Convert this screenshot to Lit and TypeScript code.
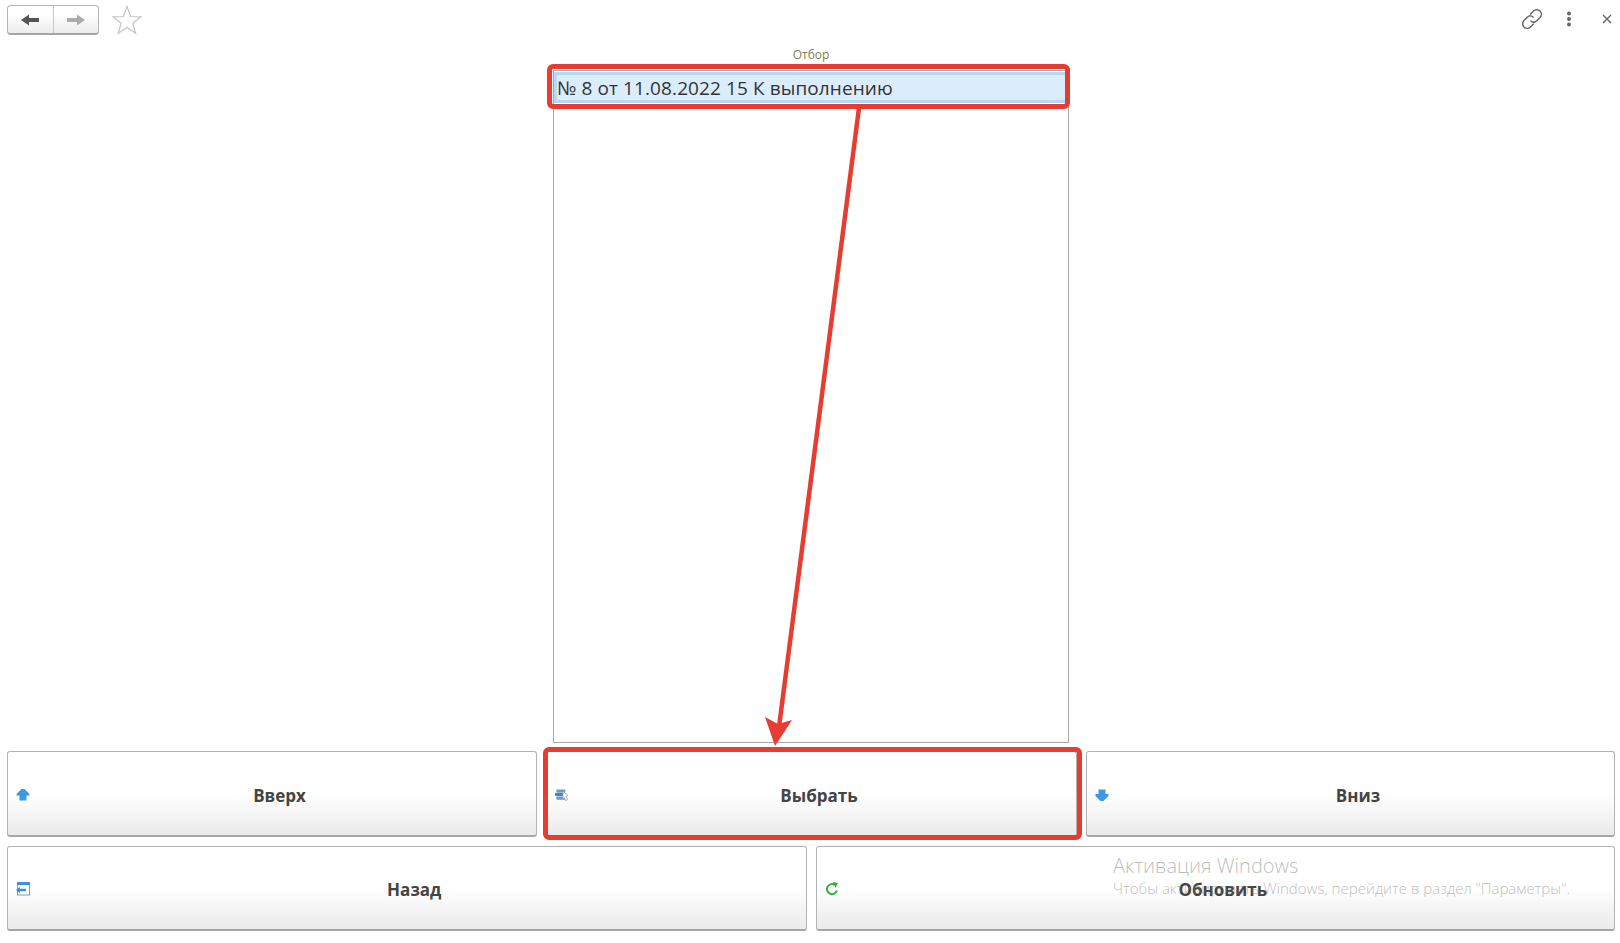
import { LitElement, html, css, svg } from "lit";
import { customElement } from "lit/decorators.js";

const upIcon = svg`<svg class="ico" viewBox="0 0 14 14"><path d="M5.500 1 L8.500 1 L13.500 6 L13.500 7.500 L10.500 7.500 L10.500 12.500 L3.500 12.500 L3.500 7.500 L.5 7.500 L.5 6 Z" fill="#3d9ae2"/></svg>`;
const downIcon = svg`<svg class="ico" viewBox="0 0 14 14"><path d="M3.500 1.500 L10.500 1.500 L10.500 6 L13.500 6 L13.500 8 L8.500 13 L5.500 13 L.5 8 L.5 6 L3.500 6 Z" fill="#3d9ae2"/></svg>`;
const chooseIcon = svg`<svg class="ico" viewBox="0 0 15 14"><rect x="1.500" y="1" width="9.500" height="3.200" rx=".8" fill="#6a9bcf"/><rect x="0" y="4.600" width="11" height="3.400" rx=".8" fill="#4d82bb"/><rect x="1.500" y="8.500" width="9.500" height="3.500" rx=".8" fill="#6a9bcf"/><path d="M8.500 3 L14 7.500 L12 8.500 L13.500 12 L11.500 13 L10 10 L8.500 11.500 Z" fill="#fff" stroke="#8a97a3" stroke-width=".8"/></svg>`;
const backIcon = svg`<svg class="ico" viewBox="0 0 14 14"><rect x="1.500" y=".5" width="12" height="12.500" fill="#fff" stroke="#7c9fc0"/><rect x="1" y="0" width="13" height="3" fill="#3f92dc"/><path d="M0 8 L4 4.800 L4 6.800 L10 6.800 L10 9.200 L4 9.200 L4 11.200 Z" fill="#3d8fd8"/></svg>`;
const refreshIcon = svg`<svg class="ico" viewBox="0 0 14 14"><path d="M11.800 8.500 A5 5 0 1 1 9.500 2.800" fill="none" stroke="#35ae3c" stroke-width="2"/><path d="M7.800 0 L13 1 L10.500 5.800 Z" fill="#35ae3c"/></svg>`;

@customElement("app-root")
export class AppRoot extends LitElement {
  static styles = css`
    :host { display: block; position: relative; width: 1620px; height: 943px; overflow: hidden; background: #fff; font-family: "Open Sans", "Noto Sans", sans-serif; }
    .top { height: 40px; display: flex; align-items: flex-start; padding: 5px 0 0 7px; box-sizing: border-box; }
    .nav { display: flex; width: 92px; height: 30px; box-sizing: border-box; border: 1px solid #b4b4b4; border-bottom: 2px solid #a6a6a6; border-radius: 4px; background: linear-gradient(#fff 30%, #ececec); }
    .nav div { flex: 1; display: flex; align-items: center; justify-content: center; }
    .nav div + div { border-left: 1px solid #c8c8c8; }
    .nav svg { width: 18px; height: 12px; }
    .star { width: 30px; height: 30px; margin-left: 13px; }
    .tools { margin-left: auto; display: flex; align-items: center; height: 28px; }
    .tools svg { display: block; }
    .link { width: 22px; height: 22px; margin-right: 23px; }
    .dots { width: 6px; height: 16px; margin-right: 30px; }
    .close { width: 10px; height: 10px; margin-right: 8px; }
    .label { height: 30px; line-height: 29px; text-align: center; font-size: 12px; color: #7f7d55; padding-left: 2px; box-sizing: border-box; }
    .list { width: 516px; height: 673px; margin-left: 553px; box-sizing: border-box; border: 1px solid #a9a9a9; padding: 1px 0 0 0; }
    .row { height: 31px; box-sizing: border-box; border: 3px solid #b6d9f6; border-right: 0; background: #dbedfd; color: #333; font-size: 19px; letter-spacing: .1px; line-height: 27px; white-space: nowrap; }
    .buttons { display: grid; gap: 9px; padding: 8px 5px 0 7px; }
    .r3 { grid-template-columns: 530px 531px 1fr; }
    .r3 .btn { height: 86px; }
    .r2 { grid-template-columns: 1fr 1fr; padding-top: 9px; }
    .btn { height: 85px; box-sizing: border-box; display: flex; align-items: center; padding: 0 7px 0 8px; border: 1px solid #b3b3b3; border-bottom: 2px solid #a6a6a6; border-radius: 3px; background: linear-gradient(#fff 50%, #ececec 95%); color: #444; font-size: 17px; font-weight: 700; }
    .btn span { flex: 1; text-align: center; padding-top: 3px; }
    .ico { width: 14px; height: 14px; flex: none; margin-top: 2px; }
    .mark { position: absolute; pointer-events: none; box-sizing: border-box; border: 5px solid #e63c32; border-radius: 6px; }
    .mark.a { left: 547px; top: 64px; width: 523px; height: 45px; }
    .mark.b { left: 543px; top: 747px; width: 539px; height: 93px; }
    .arrow { position: absolute; left: 0; top: 0; width: 1620px; height: 943px; pointer-events: none; }
    .wm { position: absolute; left: 1113px; top: 852px; pointer-events: none; color: rgba(120,120,120,.5); font-weight: 300; white-space: nowrap; }
    .wm .t { font-size: 20px; line-height: 27px; }
    .wm .s { font-size: 15px; line-height: 20px; margin-top: -1px; }
  `;

  render() {
    return html`
      <div class="top">
        <div class="nav">
          <div><svg viewBox="0 0 18 12"><path d="M0 6 L8 .5 L8 4 L18 4 L18 8 L8 8 L8 11.500 Z" fill="#555"/></svg></div>
          <div><svg viewBox="0 0 18 12"><path d="M18 6 L10 .5 L10 4 L0 4 L0 8 L10 8 L10 11.500 Z" fill="#aaa"/></svg></div>
        </div>
        <svg class="star" viewBox="0 0 30 30"><path d="M15 1.500 L18.600 11.500 L29 11.800 L20.800 18.200 L23.700 28.300 L15 22.400 L6.300 28.300 L9.200 18.200 L1 11.800 L11.400 11.500 Z" fill="#fff" stroke="#c4c4cc" stroke-width="1.200"/></svg>
        <div class="tools">
          <svg class="link" viewBox="0 0 22 22" fill="none" stroke="#666" stroke-width="1.500" stroke-linecap="round"><path d="M9.500 6 L12.500 3 A4 4 0 0 1 19 9.500 L15.500 13 A4 4 0 0 1 10 13"/><path d="M12.500 16 L9.500 19 A4 4 0 0 1 3 12.500 L6.500 9 A4 4 0 0 1 12 9"/></svg>
          <svg class="dots" viewBox="0 0 6 16" fill="#666"><circle cx="3" cy="2.500" r="2"/><circle cx="3" cy="8" r="2"/><circle cx="3" cy="13.500" r="2"/></svg>
          <svg class="close" viewBox="0 0 10 10" stroke="#666" stroke-width="1.400"><path d="M1 1 L9 9 M9 1 L1 9"/></svg>
        </div>
      </div>
      <div class="label">Отбор</div>
      <div class="list"><div class="row">№ 8 от 11.08.2022 15 К выполнению</div></div>
      <div class="buttons r3">
        <div class="btn">${upIcon}<span>Вверх</span></div>
        <div class="btn">${chooseIcon}<span>Выбрать</span></div>
        <div class="btn">${downIcon}<span>Вниз</span></div>
      </div>
      <div class="buttons r2">
        <div class="btn">${backIcon}<span>Назад</span></div>
        <div class="btn">${refreshIcon}<span>Обновить</span></div>
      </div>
      <div class="mark a"></div>
      <div class="mark b"></div>
      <svg class="arrow" viewBox="0 0 1620 943"><path d="M859 108 L779 727" stroke="#e63c32" stroke-width="4.500" fill="none"/><path d="M775 746 L765 717 L778 724 L792 720 Z" fill="#e63c32"/></svg>
      <div class="wm"><div class="t">Активация Windows</div><div class="s">Чтобы активировать Windows, перейдите в раздел "Параметры".</div></div>
    `;
  }
}
